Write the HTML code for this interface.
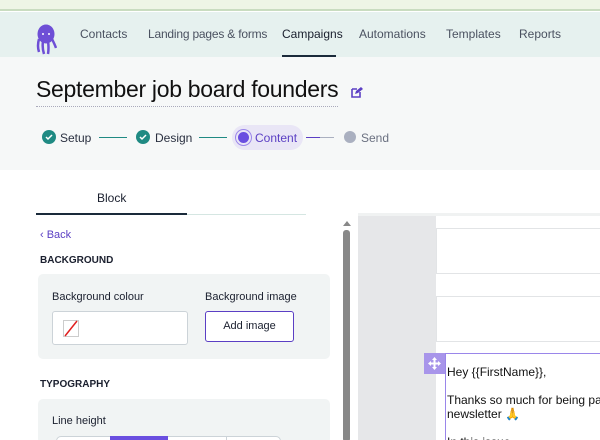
<!DOCTYPE html>
<html><head><style>
*{margin:0;padding:0;box-sizing:border-box}
html,body{width:600px;height:440px;overflow:hidden}
body{font-family:"Liberation Sans",sans-serif;background:#fff;position:relative;color:#1a1f2e}
.a{position:absolute}
.nav a{position:absolute;top:27px;font-size:12px;color:#4a5160;text-decoration:none}
</style></head><body>
<div class="a" style="left:0;top:0;width:600px;height:11px;background:#eef5e6;border-bottom:2px solid #c9dcc0"></div>
<div class="a" style="left:0;top:12px;width:600px;height:45px;background:#e6f1ef"></div>
<svg class="a" style="left:35px;top:24px" width="22" height="32" viewBox="0 0 22 32"><ellipse cx="11" cy="10" rx="8.5" ry="9.5" fill="#6e4fd6"/><path d="M4 15 Q2 22 4 28 M8 17 Q7 24 9 30 M13 17 Q14 24 13 30 M17 15 Q20 21 21 24" stroke="#6e4fd6" stroke-width="2.5" fill="none"/><circle cx="8" cy="10" r="1" fill="#fff"/><circle cx="14" cy="10" r="1" fill="#fff"/></svg>
<div class="nav">
<a style="left:80px">Contacts</a>
<a style="left:148px;letter-spacing:-0.2px">Landing pages &amp; forms</a>
<a style="left:282px;color:#1a1f2e">Campaigns</a>
<a style="left:359px">Automations</a>
<a style="left:446px">Templates</a>
<a style="left:519px">Reports</a>
</div>
<div class="a" style="left:282px;top:55px;width:54px;height:2px;background:#1a2a3a"></div>
<div class="a" style="left:0;top:57px;width:600px;height:113px;background:#f6f8f8"></div>
<div class="a" style="left:36px;top:76px;font-size:23px;color:#111;letter-spacing:-0.3px">September job board founders</div>
<div class="a" style="left:36px;top:106px;width:302px;border-top:1px dotted #aab"></div>
<svg class="a" style="left:351px;top:86px" width="12" height="12" viewBox="0 0 12 12"><path d="M1 3h5M1 3v8h8V6" stroke="#5b3fc4" stroke-width="1.6" fill="none"/><path d="M4 8l1-3 5-4 2 2-5 4z" fill="#5b3fc4"/></svg>
<div class="a" style="left:42px;top:130px;width:14px;height:14px;border-radius:50%;background:#1f8a83"></div>
<div class="a" style="left:60px;top:131px;font-size:12px;color:#2a3040">Setup</div>
<div class="a" style="left:99px;top:137px;width:28px;height:1px;background:#1f8a83"></div>
<div class="a" style="left:136px;top:130px;width:14px;height:14px;border-radius:50%;background:#1f8a83"></div>
<div class="a" style="left:155px;top:131px;font-size:12px;color:#2a3040">Design</div>
<div class="a" style="left:199px;top:137px;width:28px;height:1px;background:#1f8a83"></div>
<div class="a" style="left:232px;top:125px;width:71px;height:25px;border-radius:13px;background:#e9e6f6"></div>
<div class="a" style="left:238px;top:132px;width:11px;height:11px;border-radius:50%;background:#6a4fe0;box-shadow:0 0 0 2px #e9e6f6,0 0 0 3px #9a86ea"></div>
<div class="a" style="left:255px;top:131px;font-size:12px;color:#5b3fc4">Content</div>
<div class="a" style="left:306px;top:137px;width:14px;height:1px;background:#5b3fc4"></div>
<div class="a" style="left:320px;top:137px;width:14px;height:1px;background:#aab0c0"></div>
<div class="a" style="left:344px;top:131px;width:12px;height:12px;border-radius:50%;background:#aab0c0"></div>
<div class="a" style="left:361px;top:131px;font-size:12px;color:#6a7080">Send</div>
<svg class="a" style="left:45px;top:133px" width="8" height="8"><path d="M1 4l2 2 4-4" stroke="#fff" stroke-width="1.5" fill="none"/></svg>
<svg class="a" style="left:139px;top:133px" width="8" height="8"><path d="M1 4l2 2 4-4" stroke="#fff" stroke-width="1.5" fill="none"/></svg>

<div class="a" style="left:97px;top:191px;font-size:12px">Block</div>
<div class="a" style="left:36px;top:214px;width:270px;height:1px;background:#d5e6e2"></div>
<div class="a" style="left:36px;top:213px;width:151px;height:2px;background:#1a2a3a"></div>
<div class="a" style="left:358px;top:213px;width:242px;height:3px;background:#f0f2f2"></div>
<div class="a" style="left:40px;top:229px;font-size:11px;color:#5b3fc4">‹ Back</div>
<div class="a" style="left:40px;top:255px;font-size:10px;font-weight:bold">BACKGROUND</div>
<div class="a" style="left:38px;top:274px;width:292px;height:85px;background:#f1f4f4;border-radius:5px"></div>
<div class="a" style="left:52px;top:291px;font-size:11px">Background colour</div>
<div class="a" style="left:205px;top:291px;font-size:11px">Background image</div>
<div class="a" style="left:52px;top:311px;width:136px;height:34px;background:#fff;border:1px solid #ccd3d8;border-radius:3px"></div>
<svg class="a" style="left:63px;top:320px" width="16" height="17"><rect x="0.5" y="0.5" width="15" height="16" fill="#fff" stroke="#ccc"/><path d="M2 16L14 1" stroke="#e02020" stroke-width="1.5"/></svg>
<div class="a" style="left:205px;top:311px;width:89px;height:31px;border:1px solid #5b3fc4;border-radius:3px;background:#fff;font-size:11px;text-align:center;line-height:29px">Add image</div>
<div class="a" style="left:40px;top:379px;font-size:10px;font-weight:bold">TYPOGRAPHY</div>
<div class="a" style="left:38px;top:399px;width:292px;height:45px;background:#f1f4f4;border-radius:5px"></div>
<div class="a" style="left:52px;top:415px;font-size:11px">Line height</div>
<div class="a" style="left:56px;top:436px;width:225px;height:10px;border:1px solid #ccd3d8;border-radius:8px;background:#fff"></div>
<div class="a" style="left:110px;top:436px;width:58px;height:6px;background:#6a4fe0"></div>
<div class="a" style="left:226px;top:436px;width:1px;height:6px;background:#ccd3d8"></div>

<div class="a" style="left:343px;top:221px;width:0;height:0;border-left:4px solid transparent;border-right:4px solid transparent;border-bottom:5px solid #888"></div>
<div class="a" style="left:343px;top:230px;width:7px;height:212px;background:#888;border-radius:3px"></div>
<div class="a" style="left:358px;top:216px;width:78px;height:224px;background:#e6e7e9"></div>
<div class="a" style="left:436px;top:228px;width:170px;height:46px;border:1px solid #e2e4e6"></div>
<div class="a" style="left:436px;top:296px;width:170px;height:46px;border:1px solid #e2e4e6"></div>
<div class="a" style="left:445px;top:353px;width:160px;height:90px;border:1px solid #9a86ea;border-right:none;border-bottom:none"></div>
<div class="a" style="left:424px;top:353px;width:21px;height:21px;background:#a895ea"></div>
<svg class="a" style="left:428px;top:357px" width="13" height="13" viewBox="0 0 13 13"><path d="M6.5 1v11M1 6.5h11" stroke="#fff" stroke-width="2"/><path d="M6.5 0l2.5 3h-5zM6.5 13l2.5-3h-5zM0 6.5l3 2.5v-5zM13 6.5l-3 2.5v-5z" fill="#fff"/></svg>
<div class="a" style="left:447px;top:365px;font-size:12px;color:#111;line-height:14px;white-space:nowrap">Hey {{FirstName}},<br><br>Thanks so much for being part<br>newsletter <span style="color:#7a5fe0">🙏</span><br><br>In this issue</div>
</body></html>
